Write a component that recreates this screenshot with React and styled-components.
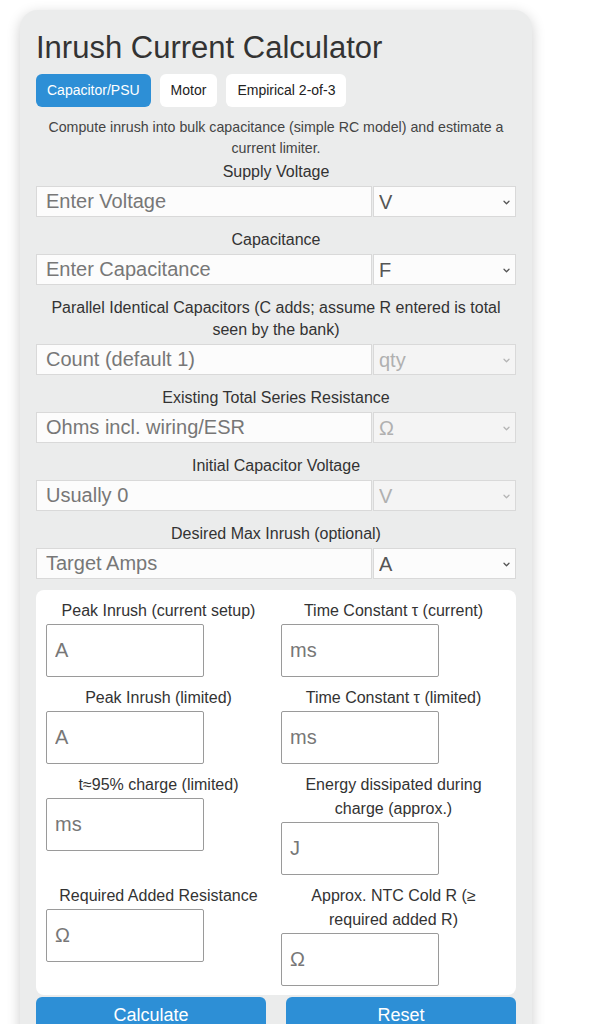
import React from 'react';
import styled, { createGlobalStyle } from 'styled-components';

const GlobalStyle = createGlobalStyle`
  html, body { margin: 0; padding: 0; background: #ffffff; }
  body { font-family: "Liberation Sans", Arial, Helvetica, sans-serif; }
  *, *::before, *::after { box-sizing: border-box; }
`;

const Card = styled.div`
  width: 512px;
  margin: 10px 0 0 20px;
  padding: 20px 16px 24px;
  background: #ebecec;
  border-radius: 18px;
  box-shadow: 0 4px 14px rgba(0, 0, 0, 0.2);
`;

const Title = styled.h1`
  margin: 0 0 8px;
  font-size: 31px;
  line-height: 36px;
  font-weight: 400;
  color: #333;
`;

const Tabs = styled.div`
  display: flex;
  gap: 9px;
`;

const Tab = styled.button`
  padding: 8px 11px;
  font-family: inherit;
  font-size: 14px;
  line-height: 17px;
  border: none;
  border-radius: 6px;
  background: ${(p) => (p.$active ? '#2d8fd6' : '#ffffff')};
  color: ${(p) => (p.$active ? '#ffffff' : '#222')};
  cursor: pointer;
`;

const Intro = styled.p`
  margin: 10px 0 2px;
  font-size: 14.2px;
  line-height: 21px;
  text-align: center;
  color: #444;
`;

const Form = styled.div`
  display: flex;
  flex-direction: column;
  gap: 12px;
`;

const Field = styled.div`
  display: flex;
  flex-direction: column;
`;

const FieldLabel = styled.label`
  display: block;
  margin-bottom: 3px;
  text-align: center;
  font-size: 16px;
  line-height: 22px;
  color: #333;
`;

const InputRow = styled.div`
  display: flex;
  gap: 1px;
`;

const TextInput = styled.input`
  flex: 0 0 70%;
  min-width: 0;
  height: 31px;
  padding: 0 9px;
  font-family: inherit;
  font-size: 20px;
  color: #333;
  background: #fcfcfc;
  border: 1px solid #d9d9d9;
  border-radius: 0;
  outline: none;
  &::placeholder { color: #777; }
`;

const SelectWrap = styled.div`
  position: relative;
  flex: 1 1 0;
  min-width: 0;
`;

const UnitSelect = styled.select`
  width: 100%;
  height: 31px;
  padding: 0 5px;
  appearance: none;
  -webkit-appearance: none;
  font-family: inherit;
  font-size: 20px;
  border: 1px solid #d9d9d9;
  border-radius: 0;
  background: #fcfcfc;
  color: #555;
  opacity: 1;
  outline: none;
  &:disabled {
    background: #f4f4f4;
    color: #b0b0b0;
    opacity: 1;
  }
`;

const Chevron = styled.svg`
  position: absolute;
  right: 6px;
  top: 50%;
  width: 7px;
  height: 5px;
  margin-top: -2px;
  pointer-events: none;
  stroke: ${(p) => (p.$disabled ? '#b5b5b5' : '#555')};
`;

const Results = styled.div`
  margin-top: 11px;
  padding: 9px 10px;
  background: #ffffff;
  border-radius: 8px;
  display: grid;
  grid-template-columns: 1fr 1fr;
  column-gap: 10px;
  row-gap: 9px;
  align-items: start;
`;

const ResultCell = styled.div`
  display: flex;
  flex-direction: column;
`;

const ResultLabel = styled.label`
  margin-bottom: 1px;
  padding: 0 4px;
  text-align: center;
  font-size: 16px;
  line-height: 24px;
  color: #333;
`;

const ResultInput = styled.input`
  width: 70%;
  height: 53px;
  padding: 0 8px;
  font-family: inherit;
  font-size: 20px;
  color: #333;
  background: #ffffff;
  border: 1px solid #9a9a9a;
  border-radius: 2px;
  outline: none;
  &::placeholder { color: #777; }
`;

const Actions = styled.div`
  display: flex;
  gap: 20px;
  margin-top: 2px;
`;

const ActionButton = styled.button`
  flex: 1 1 0;
  padding: 8px;
  font-family: inherit;
  font-size: 18px;
  line-height: 21px;
  color: #ffffff;
  background: #2d8fd6;
  border: none;
  border-radius: 6px;
  cursor: pointer;
`;

const fields = [
  { label: 'Supply Voltage', placeholder: 'Enter Voltage', unit: 'V' },
  { label: 'Capacitance', placeholder: 'Enter Capacitance', unit: 'F' },
  {
    label: 'Parallel Identical Capacitors (C adds; assume R entered is total seen by the bank)',
    placeholder: 'Count (default 1)',
    unit: 'qty',
    disabled: true,
  },
  { label: 'Existing Total Series Resistance', placeholder: 'Ohms incl. wiring/ESR', unit: 'Ω', disabled: true },
  { label: 'Initial Capacitor Voltage', placeholder: 'Usually 0', unit: 'V', disabled: true },
  { label: 'Desired Max Inrush (optional)', placeholder: 'Target Amps', unit: 'A' },
];

const results = [
  { label: 'Peak Inrush (current setup)', unit: 'A' },
  { label: 'Time Constant τ (current)', unit: 'ms' },
  { label: 'Peak Inrush (limited)', unit: 'A' },
  { label: 'Time Constant τ (limited)', unit: 'ms' },
  { label: 't≈95% charge (limited)', unit: 'ms' },
  { label: 'Energy dissipated during charge (approx.)', unit: 'J' },
  { label: 'Required Added Resistance', unit: 'Ω' },
  { label: 'Approx. NTC Cold R (≥ required added R)', unit: 'Ω' },
];

export default function App() {
  return (
    <>
      <GlobalStyle />
      <Card>
        <Title>Inrush Current Calculator</Title>
        <Tabs>
          <Tab $active>Capacitor/PSU</Tab>
          <Tab>Motor</Tab>
          <Tab>Empirical 2-of-3</Tab>
        </Tabs>
        <Intro>Compute inrush into bulk capacitance (simple RC model) and estimate a current limiter.</Intro>
        <Form>
          {fields.map((f) => (
            <Field key={f.label}>
              <FieldLabel>{f.label}</FieldLabel>
              <InputRow>
                <TextInput type="text" placeholder={f.placeholder} />
                <SelectWrap>
                  <UnitSelect disabled={f.disabled} defaultValue={f.unit}>
                    <option value={f.unit}>{f.unit}</option>
                  </UnitSelect>
                  <Chevron $disabled={f.disabled} viewBox="0 0 7 5" fill="none" strokeWidth="1.3">
                    <path d="M1 1.2l2.5 2.5 2.5-2.5" strokeLinecap="round" strokeLinejoin="round" />
                  </Chevron>
                </SelectWrap>
              </InputRow>
            </Field>
          ))}
        </Form>
        <Results>
          {results.map((r) => (
            <ResultCell key={r.label}>
              <ResultLabel>{r.label}</ResultLabel>
              <ResultInput type="text" readOnly placeholder={r.unit} />
            </ResultCell>
          ))}
        </Results>
        <Actions>
          <ActionButton>Calculate</ActionButton>
          <ActionButton>Reset</ActionButton>
        </Actions>
      </Card>
    </>
  );
}
